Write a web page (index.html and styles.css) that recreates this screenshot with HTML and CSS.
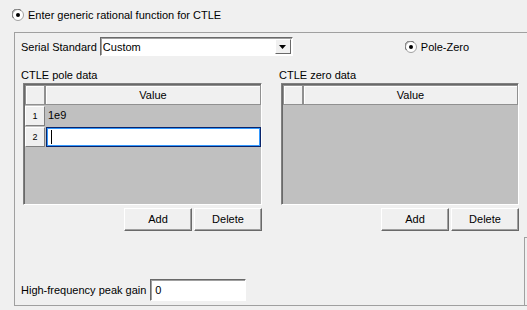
FILE: index.html
```html
<!DOCTYPE html>
<html>
<head>
<meta charset="utf-8">
<link rel="stylesheet" href="styles.css">
</head>
<body>
<div class="top">
  <svg class="radio" width="12" height="12" viewBox="0 0 12 12">
    <circle cx="6" cy="6" r="5.5" fill="#fff" stroke="#a0a0a0"/>
    <path d="M1.5 9 A5 5 0 0 1 9 1.5" fill="none" stroke="#696969"/>
    <circle cx="6" cy="6" r="2" fill="#000"/>
  </svg>
  <span>Enter generic rational function for CTLE</span>
</div>
<div class="panel">
  <div class="serial-row">
    <span class="lbl">Serial Standard</span>
    <div class="combo">
      <span class="combo-text">Custom</span>
      <span class="combo-btn"><svg width="7" height="4" viewBox="0 0 7 4"><path d="M0 0H7L3.5 4Z" fill="#000"/></svg></span>
    </div>
    <div class="pz">
      <svg class="radio" width="12" height="12" viewBox="0 0 12 12">
        <circle cx="6" cy="6" r="5.5" fill="#fff" stroke="#a0a0a0"/>
        <path d="M1.5 9 A5 5 0 0 1 9 1.5" fill="none" stroke="#696969"/>
        <circle cx="6" cy="6" r="2" fill="#000"/>
      </svg>
      <span>Pole-Zero</span>
    </div>
  </div>
  <div class="tables">
    <div class="col col-pole">
      <div class="cap">CTLE pole data</div>
      <div class="grid">
        <div class="hrow">
          <div class="corner"></div>
          <div class="hcell">Value</div>
        </div>
        <div class="row">
          <div class="rnum">1</div>
          <div class="cell">1e9</div>
        </div>
        <div class="row">
          <div class="rnum">2</div>
          <div class="cell edit"><span class="caret"></span></div>
        </div>
      </div>
      <div class="btns">
        <div class="btn">Add</div>
        <div class="btn">Delete</div>
      </div>
    </div>
    <div class="col col-zero">
      <div class="cap">CTLE zero data</div>
      <div class="grid">
        <div class="hrow">
          <div class="corner"></div>
          <div class="hcell">Value</div>
        </div>
      </div>
      <div class="btns">
        <div class="btn">Add</div>
        <div class="btn">Delete</div>
      </div>
    </div>
  </div>
  <div class="bottom">
    <div class="hf">
      <span class="lbl">High-frequency peak gain</span>
      <div class="field">0</div>
    </div>
    <div class="side"></div>
  </div>
</div>
</body>
</html>
```
FILE: styles.css
```css
html, body {
  margin: 0;
  padding: 0;
  background: #f0f0f0;
  overflow: hidden;
}
body {
  width: 527px;
  height: 310px;
  font-family: "Liberation Sans", Arial, sans-serif;
  font-size: 11px;
  color: #000;
}
.top {
  display: flex;
  align-items: center;
  height: 32px;
  padding-left: 12px;
  box-sizing: border-box;
  padding-bottom: 2px;
}
.radio {
  display: block;
  flex: none;
}
.top span {
  margin-left: 4px;
}
.panel {
  margin-left: 14px;
  width: 530px;
  height: 274px;
  box-sizing: border-box;
  border: 1px solid #a0a0a0;
  display: flex;
  flex-direction: column;
}
.serial-row {
  display: flex;
  align-items: center;
  margin-top: 4px;
  height: 19px;
  padding-left: 6px;
}
.lbl {
  white-space: nowrap;
}
.combo {
  margin-left: 3px;
  width: 193px;
  height: 19px;
  box-sizing: border-box;
  background: #fff;
  border: 1px solid;
  border-color: #696969 #fff #fff #696969;
  box-shadow: inset 1px 1px 0 #a0a0a0;
  display: flex;
  align-items: center;
  justify-content: space-between;
}
.combo-text {
  padding-left: 2px;
}
.combo-btn {
  width: 16px;
  height: 15px;
  margin-right: 1px;
  box-sizing: border-box;
  background: #f0f0f0;
  border: 1px solid;
  border-color: #fff #696969 #696969 #fff;
  display: flex;
  align-items: center;
  justify-content: center;
}
.pz {
  display: flex;
  align-items: center;
  margin-left: 112px;
}
.pz span {
  margin-left: 4px;
}
.tables {
  display: flex;
  gap: 19px;
  padding-left: 8px;
  margin-top: 13px;
}
.col {
  display: flex;
  flex-direction: column;
}
.col-pole { width: 239px; }
.col-zero { width: 238px; }
.cap {
  margin-left: -2px;
  height: 14px;
  line-height: 12px;
}
.grid {
  height: 122px;
  box-sizing: border-box;
  background: #c0c0c0;
  border: 1px solid;
  border-color: #808080 #fff #fff #808080;
  box-shadow: inset 1px 1px 0 #696969;
  padding: 1px 0 0 1px;
}
.hrow, .row {
  display: flex;
}
.hrow { height: 20px; }
.row { height: 21px; }
.corner, .hcell {
  box-sizing: border-box;
  background: #f0f0f0;
  border: 1px solid #909090;
  box-shadow: inset 1px 1px 0 #fff;
}
.corner { width: 20px; }
.hcell {
  flex: 1;
  text-align: center;
  line-height: 18px;
}
.rnum {
  width: 20px;
  box-sizing: border-box;
  background: #f0f0f0;
  border: 1px solid;
  border-color: #fff #808080 #808080 #fff;
  font-size: 9px;
  text-align: center;
  line-height: 18px;
  margin-top: 1px;
}
.cell {
  flex: 1;
  padding-left: 3px;
  line-height: 20px;
}
.edit {
  background: #fff;
  border: 1px solid #0a246a;
  box-shadow: inset 0 0 0 1px #3399ff;
  margin: 1px 0 0 1px;
  display: flex;
  align-items: center;
  padding-left: 4px;
}
.caret {
  width: 1px;
  height: 14px;
  background: #000;
}
.btns {
  display: flex;
  justify-content: flex-end;
  gap: 2px;
  margin-top: 3px;
}
.btn {
  width: 68px;
  height: 23px;
  box-sizing: border-box;
  background: #f0f0f0;
  border: 1px solid;
  border-color: #fff #696969 #696969 #fff;
  box-shadow: inset -1px -1px 0 #a0a0a0;
  text-align: center;
  line-height: 21px;
}
.bottom {
  flex: 1;
  display: flex;
}
.hf {
  width: 509px;
  display: flex;
  align-items: flex-end;
  padding-left: 6px;
  padding-bottom: 4px;
  box-sizing: border-box;
}
.hf .lbl {
  margin-bottom: 5px;
}
.field {
  margin-left: 4px;
  width: 96px;
  height: 22px;
  box-sizing: border-box;
  background: #fff;
  border: 1px solid;
  border-color: #696969 #fff #fff #696969;
  box-shadow: inset 1px 1px 0 #a0a0a0;
  padding-left: 4px;
  line-height: 20px;
}
.side {
  margin-top: 6px;
  flex: 1;
  border-top: 1px solid #a0a0a0;
  border-left: 1px solid #a0a0a0;
}
```
